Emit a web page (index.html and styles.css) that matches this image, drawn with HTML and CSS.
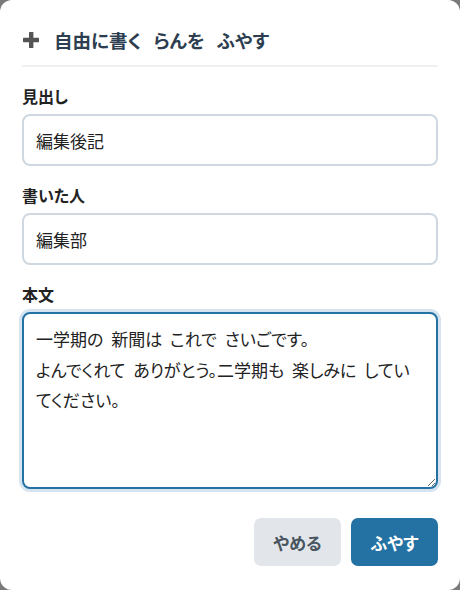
FILE: index.html
```html
<!DOCTYPE html>
<html lang="ja">
<head>
<meta charset="utf-8">
<title>自由に書く らんを ふやす</title>
<link rel="stylesheet" href="styles.css">
</head>
<body>
<div class="dialog">
  <div class="header">
    <svg class="plus" width="16" height="16" viewBox="0 0 16 16" aria-hidden="true">
      <rect x="6" y="0" width="4.4" height="16" rx="0.6" fill="#555"/>
      <rect x="0" y="5.8" width="16" height="4.4" rx="0.6" fill="#555"/>
    </svg>
    <h2 class="title">自由に書く らんを ふやす</h2>
  </div>
  <div class="field">
    <label class="label">見出し</label>
    <input class="input" type="text" value="編集後記">
  </div>
  <div class="field">
    <label class="label">書いた人</label>
    <input class="input" type="text" value="編集部">
  </div>
  <div class="field">
    <label class="label">本文</label>
    <textarea class="textarea">一学期の 新聞は これで さいごです。
よんでくれて ありがとう。二学期も 楽しみに していてください。</textarea>
  </div>
  <div class="actions">
    <button class="btn btn-cancel">やめる</button>
    <button class="btn btn-primary">ふやす</button>
  </div>
</div>
</body>
</html>
```
FILE: styles.css
```css
html, body {
  margin: 0;
  padding: 0;
  background: #7a7a7a;
}
body {
  font-family: "Noto Sans CJK JP", "Noto Sans", sans-serif;
  font-feature-settings: "palt";
}
.dialog {
  box-sizing: border-box;
  width: 460px;
  height: 590px;
  background: #fff;
  border-radius: 12px;
  padding: 0 22px;
  display: flex;
  flex-direction: column;
}
.header {
  display: flex;
  align-items: center;
  height: 40px;
  padding: 20px 0 5px;
  border-bottom: 2px solid #eef0f2;
}
.plus {
  margin-left: 1px;
  margin-right: 15px;
  flex: none;
}
.title {
  margin: 0;
  font-size: 18.5px;
  font-weight: 700;
  color: #2c3e50;
  line-height: 40px;
  word-spacing: 8px;
}
.field {
  display: flex;
  flex-direction: column;
  gap: 6px;
  margin-top: 17px;
}
.label {
  font-size: 16px;
  font-weight: 700;
  line-height: 24px;
  color: #222;
}
.input, .textarea {
  box-sizing: border-box;
  width: 100%;
  font-family: inherit;
  font-feature-settings: "palt";
  font-size: 17px;
  color: #222;
  background: #fff;
  border: 2px solid #cfd8e1;
  border-radius: 8px;
  margin: 0;
  outline: none;
  word-spacing: 4px;
}
.input {
  height: 52px;
  padding: 0 12px;
}
.textarea {
  height: 177px;
  padding: 10px 12px;
  line-height: 30.5px;
  border-color: #2471a3;
  box-shadow: 0 0 0 3px #d5e4f0;
  resize: vertical;
}
.actions {
  display: flex;
  justify-content: flex-end;
  gap: 10px;
  margin-top: 29px;
}
.btn {
  width: 87px;
  height: 48px;
  border: none;
  border-radius: 7px;
  font-family: inherit;
  font-feature-settings: "palt";
  font-size: 17px;
  font-weight: 700;
  padding: 0;
}
.btn-cancel {
  background: #e2e6ea;
  color: #495560;
}
.btn-primary {
  background: #2471a3;
  color: #fff;
}
```
